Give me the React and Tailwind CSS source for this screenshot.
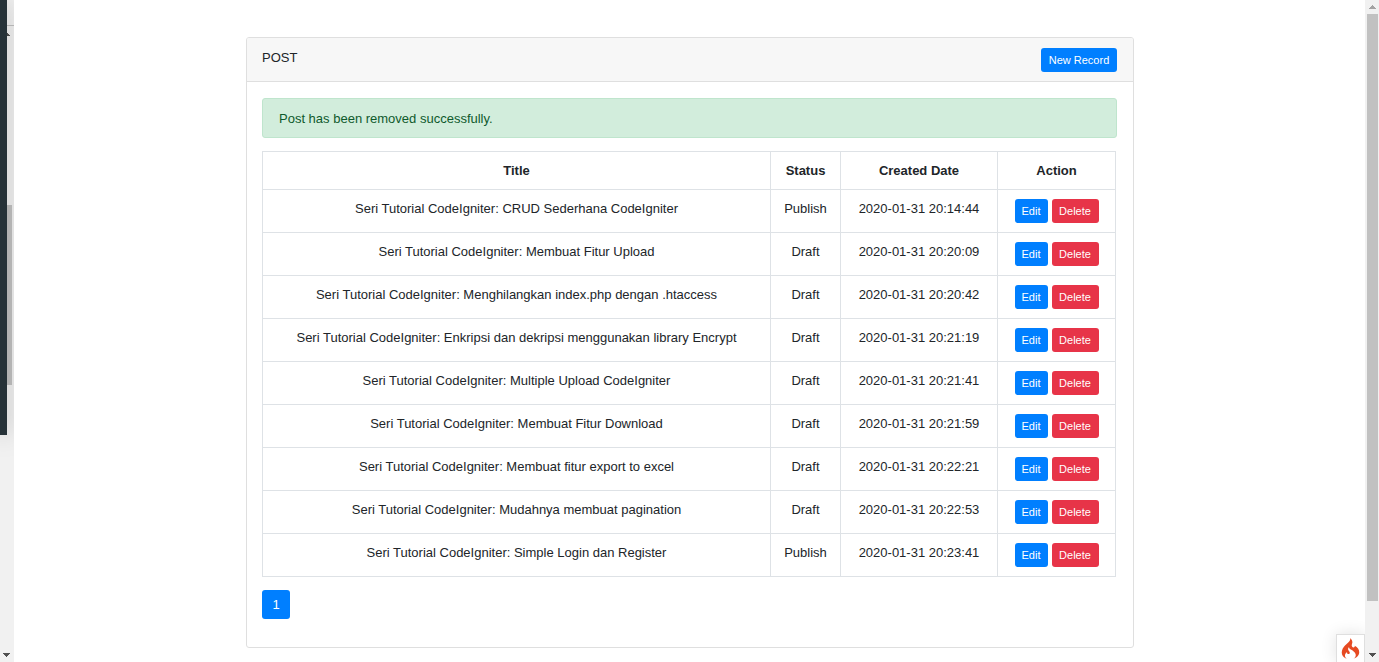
import { SiCodeigniter } from "react-icons/si";

const posts = [
  ["Seri Tutorial CodeIgniter: CRUD Sederhana CodeIgniter", "Publish", "2020-01-31 20:14:44"],
  ["Seri Tutorial CodeIgniter: Membuat Fitur Upload", "Draft", "2020-01-31 20:20:09"],
  ["Seri Tutorial CodeIgniter: Menghilangkan index.php dengan .htaccess", "Draft", "2020-01-31 20:20:42"],
  ["Seri Tutorial CodeIgniter: Enkripsi dan dekripsi menggunakan library Encrypt", "Draft", "2020-01-31 20:21:19"],
  ["Seri Tutorial CodeIgniter: Multiple Upload CodeIgniter", "Draft", "2020-01-31 20:21:41"],
  ["Seri Tutorial CodeIgniter: Membuat Fitur Download", "Draft", "2020-01-31 20:21:59"],
  ["Seri Tutorial CodeIgniter: Membuat fitur export to excel", "Draft", "2020-01-31 20:22:21"],
  ["Seri Tutorial CodeIgniter: Mudahnya membuat pagination", "Draft", "2020-01-31 20:22:53"],
  ["Seri Tutorial CodeIgniter: Simple Login dan Register", "Publish", "2020-01-31 20:23:41"],
];

const cell = "border border-[#dee2e6] px-2 py-[9px]";
const button = "h-6 rounded-[3px] text-center text-[11px] leading-6 text-white";

function Arrow({ up, className }) {
  return (
    <svg viewBox="0 0 7 4" className={className} shapeRendering="crispEdges" aria-hidden="true">
      <path fill="currentColor" d={up ? "M3 0h1v1h1v1h1v1h1v1H0V3h1V2h1V1h1z" : "M0 0h7v1H6v1H5v1H4v1H3V3H2V2H1V1H0z"} />
    </svg>
  );
}

function LeftEdge() {
  return (
    <div className="relative h-screen w-[14px] shrink-0 overflow-hidden bg-[#f1f1f1]" aria-hidden="true">
      <div className="absolute top-[25px] left-0 h-px w-full bg-[#c1c1c1]" />
      <Arrow up className="absolute top-[32px] left-[3px] h-1 w-[7px] text-[#505050]" />
      <div className="absolute top-[205px] left-0 h-[180px] w-3 bg-[#c1c1c1]" />
      <div className="absolute top-0 left-0 h-[435px] w-[7px] bg-[#263238] shadow-[0_0_24px_rgba(0,0,0,0.35)]" />
      <Arrow className="absolute bottom-[5px] left-[3px] h-1 w-[7px] text-[#505050]" />
    </div>
  );
}

function RightScrollbar() {
  return (
    <div className="flex h-screen w-[14px] shrink-0 flex-col items-center bg-[#f1f1f1] pt-[5px] pb-[5px]" aria-hidden="true">
      <Arrow up className="h-1 w-[7px] shrink-0 text-[#a3a3a3]" />
      <div className="mt-[5px] mb-[52px] w-[11px] flex-1 bg-[#c1c1c1]" />
      <Arrow className="h-1 w-[7px] shrink-0 text-[#505050]" />
    </div>
  );
}

export default function App() {
  return (
    <div className="flex h-screen overflow-hidden bg-white font-['Liberation_Sans',Arial,sans-serif] text-[13px] leading-[19px] text-[#212529]">
      <LeftEdge />
      <main className="relative min-w-0 flex-1 overflow-hidden pt-[37px] pr-[14px] pl-[15px]">
        <section className="mx-auto max-w-[888px] rounded-[3px] border border-[#dfdfdf]">
          <header className="flex items-start justify-between rounded-t-[2px] border-b border-[#dfdfdf] bg-[#f7f7f7] pt-[10px] pr-4 pb-[9px] pl-[15px]">
            <h1>POST</h1>
            <button type="button" className={`${button} w-[76px] bg-[#007fff]`}>New Record</button>
          </header>
          <div className="pt-4 pr-4 pb-7 pl-[15px]">
            <div role="status" className="flex h-10 items-center rounded-[3px] border border-[#bfe5cd] bg-[#d2eddc] px-4 text-[#0f5a2c]">
              Post has been removed successfully.
            </div>
            <div className="pt-[13px] pr-px">
              <table className="w-full table-fixed border-collapse text-center">
                <thead>
                  <tr>
                    <th className={cell}>Title</th>
                    <th className={`${cell} w-[70px]`}>Status</th>
                    <th className={`${cell} w-[157px]`}>Created Date</th>
                    <th className={`${cell} w-[118px]`}>Action</th>
                  </tr>
                </thead>
                <tbody className="align-top">
                  {posts.map(([title, status, date]) => (
                    <tr key={date}>
                      <td className={cell}>{title}</td>
                      <td className={cell}>{status}</td>
                      <td className={cell}>{date}</td>
                      <td className={cell}>
                        <div className="flex justify-center gap-1">
                          <button type="button" className={`${button} w-[33px] bg-[#007fff]`}>Edit</button>
                          <button type="button" className={`${button} w-[47px] bg-[#e73448]`}>Delete</button>
                        </div>
                      </td>
                    </tr>
                  ))}
                </tbody>
              </table>
            </div>
            <nav aria-label="Pagination" className="flex pt-[13px]">
              <a href="#1" aria-current="page" className="flex h-[29px] w-7 items-center justify-center rounded-[3px] bg-[#007fff] text-white">
                1
              </a>
            </nav>
          </div>
        </section>
        <button
          type="button"
          aria-label="CodeIgniter debug toolbar"
          className="absolute right-0 bottom-0 flex h-7 w-[29px] justify-center border border-b-0 border-[#dfdfdf] bg-white pt-[3px] shadow-[0_0_16px_rgba(0,0,0,0.12)]"
        >
          <SiCodeigniter className="h-[21px] w-[21px] text-[#e64a22]" />
        </button>
      </main>
      <RightScrollbar />
    </div>
  );
}
